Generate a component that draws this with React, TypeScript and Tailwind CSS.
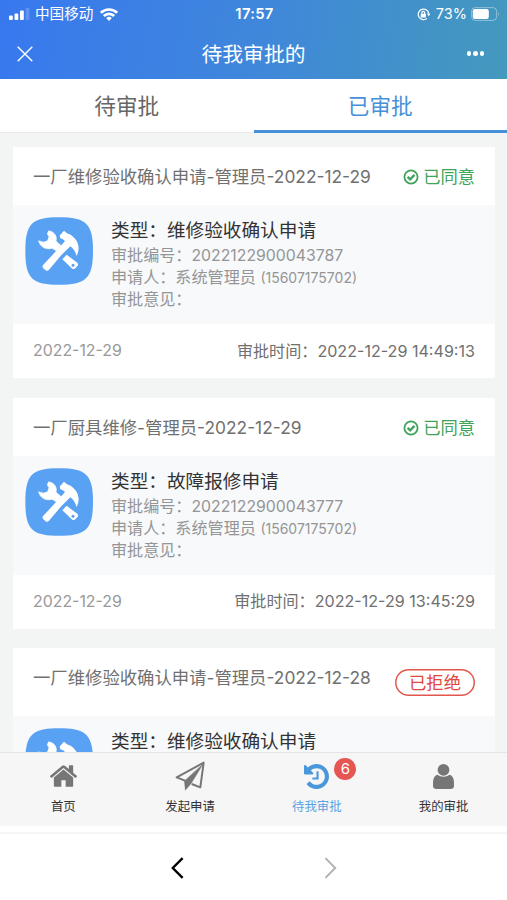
import type { ReactNode } from 'react';
import clsx from 'clsx';

type Approval = {
  title: string;
  type: string;
  code: string;
  date: string;
  time: string;
  status: 'approved' | 'rejected';
};

const approvals: Approval[] = [
  {
    title: '一厂维修验收确认申请-管理员-2022-12-29',
    type: '维修验收确认申请',
    code: '2022122900043787',
    date: '2022-12-29',
    time: '2022-12-29 14:49:13',
    status: 'approved',
  },
  {
    title: '一厂厨具维修-管理员-2022-12-29',
    type: '故障报修申请',
    code: '2022122900043777',
    date: '2022-12-29',
    time: '2022-12-29 13:45:29',
    status: 'approved',
  },
  {
    title: '一厂维修验收确认申请-管理员-2022-12-28',
    type: '维修验收确认申请',
    code: '2022122800043765',
    date: '2022-12-28',
    time: '2022-12-28 16:20:41',
    status: 'rejected',
  },
];

function ToolsIcon() {
  return (
    <svg viewBox="30 35.5 204 204" className="h-[68px] w-[68px] shrink-0" aria-hidden="true">
      <path
        d="M132 36C214 36 234 56 234 137S214 239 132 239 31 219 31 137 51 36 132 36Z"
        fill="#59a1f2"
      />
      {/* wrench */}
      <path
        d="M101 77C118 80 127 93 123 108L138 121 124 137 111 129C94 135 75 126 71 107L85 111 98 107 102 95 97 86Z"
        fill="#fff"
        stroke="#fff"
        strokeWidth="2"
        strokeLinejoin="round"
      />
      <path d="M155 149 187 173Q191 178 188 182L180 190Q176 193 171 190L142 162Z" fill="#fff" />
      <circle cx="174" cy="180" r="4.5" fill="#59a1f2" />
      {/* hammer */}
      <path
        d="M147 77 157 85C178 91 195 114 190 138L185 153C182 140 176 131 166 123L138 151 102 194Q97 199 92 195L85 189Q80 184 85 179L121 140 149 109C150 105 146 102 136 99L134 91Z"
        fill="#fff"
      />
    </svg>
  );
}

function StatusBar() {
  return (
    <div className="flex h-7 items-center px-[9px] text-white">
      <div className="flex flex-1 items-center">
        <svg viewBox="0 0 21 12" className="h-3 w-[21px]" fill="#fff" aria-hidden="true">
          <rect x="0" y="7.5" width="3.8" height="4.5" rx="1" />
          <rect x="5.5" y="5.5" width="3.8" height="6.5" rx="1" />
          <rect x="11" y="2.5" width="3.8" height="9.5" rx="1" />
          <rect x="16.6" y="0" width="3.8" height="12" rx="1" opacity=".2" />
        </svg>
        <span className="ml-[5px] text-[14.6px] leading-5">中国移动</span>
        <svg viewBox="0 0 18 13" className="ml-[7px] h-[13px] w-[18px]" fill="none" stroke="#fff" strokeWidth="2.6" aria-hidden="true">
          <path d="M.9 4.8A11.6 11.6 0 0 1 17.1 4.8" />
          <path d="M3.8 8A7.4 7.4 0 0 1 14.2 8" />
          <path d="M6.2 10.1A4 4 0 0 1 11.8 10.1L9 13Z" fill="#fff" stroke="none" />
        </svg>
      </div>
      <span className="text-[14.8px] font-semibold tracking-[0.3px]">17:57</span>
      <div className="-mr-0.5 flex flex-1 items-center justify-end">
        <svg viewBox="0 0 14 14" className="h-[13px] w-[13px]" fill="none" stroke="#fff" strokeWidth="1.3" aria-hidden="true">
          <path d="M10.8 11.2A5.7 5.7 0 1 1 12.7 6" />
          <path d="M10.6 6H14.4L12.7 8.8Z" fill="#fff" stroke="none" />
          <rect x="4" y="6.3" width="5.6" height="4" rx=".6" fill="#fff" stroke="none" />
          <path d="M5.3 6.5V5.2A1.5 1.5 0 0 1 8.3 5.2V6.5" />
        </svg>
        <span className="ml-1.5 text-[14.5px]">73%</span>
        <svg viewBox="0 0 29 14" className="ml-1 h-3.5 w-[29px]" aria-hidden="true">
          <rect x=".6" y=".6" width="25" height="12.8" rx="3.6" fill="none" stroke="#fff" strokeOpacity=".4" />
          <rect x="1.8" y="2.1" width="16" height="9.8" rx="2.2" fill="#fff" />
          <path d="M27 4.8Q28.8 7 27 9.2Z" fill="#fff" opacity=".45" />
        </svg>
      </div>
    </div>
  );
}

function Header() {
  return (
    <header className="h-[79px] shrink-0 bg-[linear-gradient(100deg,#3878ef_0%,#3f86dc_48%,#4499bd_100%)] text-white">
      <StatusBar />
      <div className="flex h-[51px] items-center pr-[14px] pl-[17px]">
        <div className="flex-1">
          <svg viewBox="0 0 16 16" className="h-4 w-4" stroke="#fff" strokeWidth="1.4" aria-hidden="true">
            <path d="M.7.7 15.3 15.3M15.3.7.7 15.3" />
          </svg>
        </div>
        <h1 className="ml-1.5 pt-0.5 text-[20.8px] leading-7">待我审批的</h1>
        <div className="flex flex-1 justify-end gap-[2px] pr-[9px]">
          <span className="h-[4.5px] w-[4.5px] rounded-full bg-white" />
          <span className="h-[4.5px] w-[4.5px] rounded-full bg-white" />
          <span className="h-[4.5px] w-[4.5px] rounded-full bg-white" />
        </div>
      </div>
    </header>
  );
}

function Tabs() {
  return (
    <nav className="flex h-[54px] shrink-0 border-b border-[#e9ebeb] bg-white text-[21.6px] leading-[53px]">
      <button className="h-[54px] flex-1 text-[#666]">待审批</button>
      <button className="h-[54px] flex-1 border-b-[3px] border-[#4690d8] pt-px text-[#4690d8]">已审批</button>
    </nav>
  );
}

function StatusLabel({ status }: { status: Approval['status'] }) {
  if (status === 'rejected') {
    return (
      <span className="mt-1 flex h-[27px] w-20 items-center justify-center rounded-full text-[17.3px] text-[#e2483d] ring-[1.5px] ring-[#e2574c] ring-inset">
        已拒绝
      </span>
    );
  }
  return (
    <span className="flex items-center gap-1 text-[17.3px] text-[#40a35b]">
      <svg viewBox="0 0 16 16" className="h-4 w-4" fill="none" stroke="#40a35b" aria-hidden="true">
        <circle cx="8" cy="8" r="6.6" strokeWidth="1.8" />
        <path d="M4.6 7.8 7.2 10.3 11.5 5.9" strokeWidth="2.3" />
      </svg>
      已同意
    </span>
  );
}

function ApprovalCard({ item }: { item: Approval }) {
  return (
    <article className="shrink-0 bg-white">
      <div
        className={clsx(
          'flex justify-between px-5 pt-[17px]',
          item.status === 'rejected' ? 'h-[68px]' : 'h-[58px]',
        )}
      >
        <h2 className="text-[17.35px] leading-[26px] whitespace-nowrap text-[#707070]">{item.title}</h2>
        <div className="leading-[26px]">
          <StatusLabel status={item.status} />
        </div>
      </div>
      <div className="flex h-[119px] bg-[#f7f9fb] pt-3 pl-3">
        <ToolsIcon />
        <div className="ml-[18px] text-[16.1px] leading-[22px] whitespace-nowrap text-[#959595]">
          <h3 className="text-[18.65px] leading-[27px] text-[#333]">类型：{item.type}</h3>
          <p className="h-[22px]">
            审批编号：<span className="text-[15.8px]">{item.code}</span>
          </p>
          <p className="h-[22px]">
            申请人：系统管理员 <span className="text-[14px]">(15607175702)</span>
          </p>
          <p>审批意见：</p>
        </div>
      </div>
      <div className="flex h-[54px] items-center justify-between px-5 text-[16.1px]">
        <span className="text-[15.9px] text-[#999]">{item.date}</span>
        <span className="text-[#707070]">审批时间：{item.time}</span>
      </div>
    </article>
  );
}

function NavItem({ label, active, children }: { label: string; active?: boolean; children: ReactNode }) {
  return (
    <button
      className={clsx(
        'flex flex-1 flex-col items-center pt-2',
        active ? 'text-[#4a97dc]' : 'text-[#767676]',
      )}
    >
      <div className="relative flex h-[30px] items-center">{children}</div>
      <span className={clsx('mt-1.5 text-[12.4px] leading-5', active ? 'text-[#5ba3e0]' : 'text-[#333]')}>
        {label}
      </span>
    </button>
  );
}

function BottomNav() {
  return (
    <nav className="flex h-[74px] shrink-0 border-t border-[#e4e4e4] bg-[#f6f6f6]">
      <NavItem label="首页">
        <svg viewBox="90 250 1612 1290" className="h-[22px] w-[27px]" fill="currentColor" aria-hidden="true">
          <path d="M1472 992v480q0 26-19 45t-45 19h-384v-384h-256v384h-384q-26 0-45-19t-19-45v-480q0-1 .5-3t.5-3l575-474 575 474q1 2 1 6zm223-69l-62 74q-8 9-21 11h-3q-13 0-21-7l-692-577-692 577q-12 8-24 7-13-2-21-11l-62-74q-8-10-7-23.5t11-21.5l719-599q32-26 76-26t76 26l244 204v-195q0-14 9-23t23-9h192q14 0 23 9t9 23v408l219 182q10 8 11 21.5t-7 23.5z" />
        </svg>
      </NavItem>
      <NavItem label="发起申请">
        <svg viewBox="0 0 90 90" className="h-[30px] w-[30px]" fill="none" stroke="currentColor" strokeWidth="6" strokeLinejoin="round" aria-hidden="true">
          <path d="M30 59 5 49 86 5 76 79 50 69" />
          <path d="M85 8 28 60 31 88 49 67Z" fill="currentColor" strokeWidth="1" />
        </svg>
      </NavItem>
      <NavItem label="待我审批" active>
        <svg viewBox="128 128 1536 1536" className="h-[25px] w-[25px]" fill="currentColor" aria-hidden="true">
          <path d="M1664 896q0 156-61 298t-164 245-245 164-298 61q-172 0-327-72.5t-264-204.5q-7-10-6.5-22.5t8.5-20.5l137-138q10-9 25-9 16 2 23 12 73 95 179 147t225 52q104 0 198.5-40.5t163.5-109.5 109.5-163.5 40.5-198.5-40.5-198.5-109.5-163.5-163.5-109.5-198.5-40.5q-98 0-188 35.5t-160 101.5l137 138q31 30 14 69-17 40-59 40h-448q-26 0-45-19t-19-45v-448q0-42 40-59 39-17 69 14l130 129q107-101 244.5-156.5t284.5-55.5q156 0 298 61t245 164 164 245 61 298zm-640-288v448q0 14-9 23t-23 9h-320q-14 0-23-9t-9-23v-64q0-14 9-23t23-9h224v-352q0-14 9-23t23-9h64q14 0 23 9t9 23z" />
        </svg>
        <span className="absolute -top-[3px] left-[30px] flex h-[22px] w-[22px] items-center justify-center rounded-full bg-[#e55551] text-[15px] text-white">
          6
        </span>
      </NavItem>
      <NavItem label="我的审批">
        {/* head and shoulders, separated by a thin gap */}
        <svg viewBox="0 0 64 76" className="h-[25px] w-[21px]" fill="currentColor" aria-hidden="true">
          <circle cx="32" cy="18" r="18" />
          <path d="M13 33Q32 45 51 33Q64 37 64 58V66Q64 76 53 76H11Q0 76 0 66V58Q0 37 13 33Z" />
        </svg>
      </NavItem>
    </nav>
  );
}

function BrowserBar() {
  return (
    <div className="shrink-0 bg-white pt-1.5">
      <div className="flex h-[68px] items-center justify-center gap-[140px] border-t-2 border-[#f4f5f5] pt-0.5">
        <svg viewBox="0 0 13 22" className="h-[22px] w-[13px]" fill="none" stroke="#000" strokeWidth="2.4" aria-hidden="true">
          <path d="M11.6 1.2 1.8 11 11.6 20.8" />
        </svg>
        <svg viewBox="0 0 13 22" className="h-[22px] w-[13px]" fill="none" stroke="#b0b0b0" strokeWidth="1.9" aria-hidden="true">
          <path d="M1.4 1.2 11.2 11 1.4 20.8" />
        </svg>
      </div>
    </div>
  );
}

export default function App() {
  return (
    <div className="flex h-[900px] w-[507px] flex-col overflow-hidden bg-[#f3f5f5] font-[Inter,'Noto_Sans_CJK_SC',sans-serif]">
      <Header />
      <Tabs />
      <main className="flex min-h-0 flex-1 flex-col gap-[19.5px] overflow-hidden pt-3.5 pr-3 pl-[13px]">
        {approvals.map((item) => (
          <ApprovalCard key={item.code} item={item} />
        ))}
      </main>
      <BottomNav />
      <BrowserBar />
    </div>
  );
}
